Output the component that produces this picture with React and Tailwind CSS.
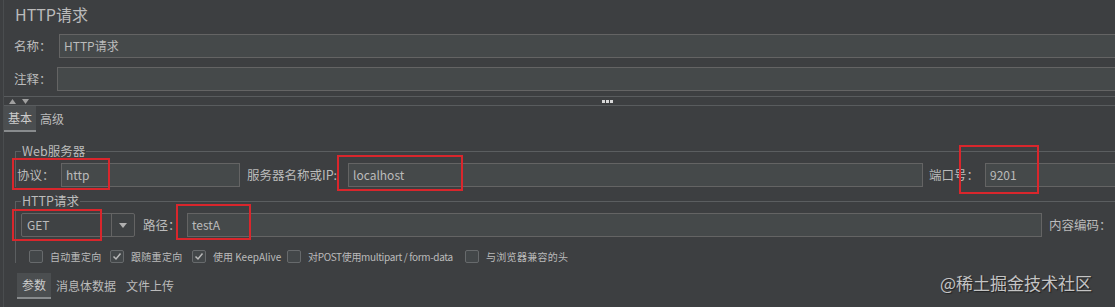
import React from "react";

const FONT = "font-['Noto_Sans_CJK_SC','Noto_Sans',sans-serif]";

function Field({ className = "", children }) {
  return (
    <div
      className={`h-[24px] bg-[#45494a] border border-[#646464] flex items-center pl-[4px] text-[12px] text-[#bbbbbb] overflow-hidden whitespace-nowrap ${className}`}
    >
      {children}
    </div>
  );
}

function Label({ className = "", children }) {
  return (
    <div className={`text-[12.5px] text-[#bbbbbb] whitespace-nowrap shrink-0 ${className}`}>{children}</div>
  );
}

function GroupHeader({ title }) {
  return (
    <div className="flex items-center h-[16px]">
      <div className="self-end h-[8px] w-[6px] border-l border-t border-[#5b5e60] shrink-0" />
      <div className="text-[12.5px] text-[#bbbbbb] px-[1px] leading-[16px] whitespace-nowrap">{title}</div>
      <div className="flex-1 h-px bg-[#5b5e60]" />
    </div>
  );
}

function Check({ checked, label, className = "", labelClass = "" }) {
  return (
    <div className={`flex items-center gap-[7px] shrink-0 ${className}`}>
      <div className="w-[14px] h-[13px] shrink-0 border border-[#676a6c] bg-[#434749] rounded-[2px] flex items-center justify-center">
        {checked && (
          <svg width="10" height="9" viewBox="0 0 10 9">
            <polyline points="1.5,4.5 4,7 8.5,1.5" fill="none" stroke="#b9b9b9" strokeWidth="1.5" />
          </svg>
        )}
      </div>
      <span className={`text-[10px] text-[#bbbbbb] whitespace-nowrap ${labelClass}`}>{label}</span>
    </div>
  );
}

function RedBox({ className }) {
  return <div className={`absolute border-2 border-[#d9262c] pointer-events-none ${className}`} />;
}

export default function App() {
  return (
    <div className={`w-[1115px] h-[307px] bg-[#3d3f41] relative overflow-hidden ${FONT}`}>
      <div className="ml-[3px] h-full border-l border-[#4a4d4f] flex flex-col">
        {/* title */}
        <div className="h-[34px] pl-[11px] pt-[3px] text-[16px] leading-[22px] text-[#bbbbbb]">HTTP请求</div>

        {/* name */}
        <div className="flex items-center h-[24px]">
          <Label className="w-[55px] pl-[10px]">名称：</Label>
          <Field className="flex-1 border-r-0">HTTP请求</Field>
        </div>

        {/* comment */}
        <div className="flex items-center h-[24px] mt-[9px]">
          <Label className="w-[53px] pl-[10px]">注释：</Label>
          <Field className="flex-1 border-r-0" />
        </div>

        {/* splitter */}
        <div className="mt-[5px] h-[10px] border-y border-[#595c5e] flex items-center relative">
          <div className="flex items-center gap-[6px] ml-[5px]">
            <svg width="7" height="5" viewBox="0 0 7 5">
              <polygon points="0,5 3.5,0 7,5" fill="#a0a0a0" />
            </svg>
            <svg width="7" height="5" viewBox="0 0 7 5">
              <polygon points="0,0 7,0 3.5,5" fill="#a0a0a0" />
            </svg>
          </div>
          <div className="flex gap-[1px] ml-[573px]">
            <div className="w-[3px] h-[3px] bg-[#d8d8d8]" />
            <div className="w-[3px] h-[3px] bg-[#d8d8d8]" />
            <div className="w-[3px] h-[3px] bg-[#d8d8d8]" />
          </div>
        </div>

        {/* tabs */}
        <div className="h-[26px] flex items-stretch">
          <div className="px-[4px] bg-[#4b4e50] border-b-2 border-[#888b8d] flex items-center text-[12px] text-[#cccccc]">基本</div>
          <div className="px-[4px] flex items-center text-[12px] text-[#bbbbbb]">高级</div>
        </div>

        {/* Web server group */}
        <div className="ml-[11px] mt-[11px]">
          <GroupHeader title="Web服务器" />
          <div className="border-l border-[#5b5e60] pt-[4px]">
            <div className="flex items-center h-[24px]">
              <Label className="w-[45px] pl-[1px]">协议：</Label>
              <Field className="w-[179px] shrink-0">http</Field>
              <Label className="ml-[7px] w-[101px]">服务器名称或IP:</Label>
              <Field className="w-[575px] shrink-0">localhost</Field>
              <Label className="ml-[6px] w-[56px]">端口号：</Label>
              <Field className="w-[150px] shrink-0">9201</Field>
            </div>
          </div>
        </div>

        {/* HTTP request group */}
        <div className="ml-[11px] mt-[6px]">
          <GroupHeader title="HTTP请求" />
          <div className="border-l border-[#5b5e60] pt-[4px]">
            <div className="flex items-center h-[24px]">
              <div className="ml-[5px] w-[114px] h-[24px] shrink-0 border border-[#646464] rounded-[2px] bg-[#3f4244] flex">
                <div className="flex-1 flex items-center pl-[5px] text-[12px] text-[#bbbbbb]">GET</div>
                <div className="w-[23px] border-l border-[#646464] flex items-center justify-center">
                  <svg width="8" height="5" viewBox="0 0 8 5">
                    <polygon points="0,0 8,0 4,5" fill="#b0b0b0" />
                  </svg>
                </div>
              </div>
              <Label className="ml-[8px] w-[44px]">路径：</Label>
              <Field className="w-[855px] shrink-0">testA</Field>
              <Label className="ml-[7px]">内容编码：</Label>
            </div>
            <div className="flex items-center h-[13px] mt-[13px] pl-[13px]">
              <Check className="w-[81px]" label="自动重定向" labelClass="tracking-[0.3px]" />
              <Check className="w-[82px]" checked label="跟随重定向" labelClass="tracking-[0.3px]" />
              <Check className="w-[95px]" checked label="使用 KeepAlive" />
              <Check className="w-[178px]" label="对POST使用multipart / form-data" labelClass="tracking-[-0.35px]" />
              <Check label="与浏览器兼容的头" labelClass="tracking-[0.3px]" />
            </div>
          </div>
        </div>

        {/* bottom tabs */}
        <div className="h-[26px] mt-[10px] ml-[13px] flex items-stretch">
          <div className="px-[5px] bg-[#4b4e50] border-b-2 border-[#888b8d] flex items-center text-[12px] text-[#cccccc]">参数</div>
          <div className="px-[5px] flex items-center text-[12px] text-[#bbbbbb]">消息体数据</div>
          <div className="px-[5px] flex items-center text-[12px] text-[#bbbbbb]">文件上传</div>
        </div>
      </div>

      {/* red annotation boxes */}
      <RedBox className="left-[12px] top-[158px] w-[98px] h-[32px]" />
      <RedBox className="left-[337px] top-[155px] w-[126px] h-[36px]" />
      <RedBox className="left-[959px] top-[145px] w-[80px] h-[49px]" />
      <RedBox className="left-[12px] top-[209px] w-[90px] h-[32px]" />
      <RedBox className="left-[176px] top-[204px] w-[75px] h-[36px]" />

      {/* watermark */}
      <div className="absolute left-[940px] top-[271px] text-[17px] leading-[24px] text-[#c4c4c4] [text-shadow:1px_1px_1px_rgba(0,0,0,0.5)] whitespace-nowrap">
        @稀土掘金技术社区
      </div>
    </div>
  );
}
